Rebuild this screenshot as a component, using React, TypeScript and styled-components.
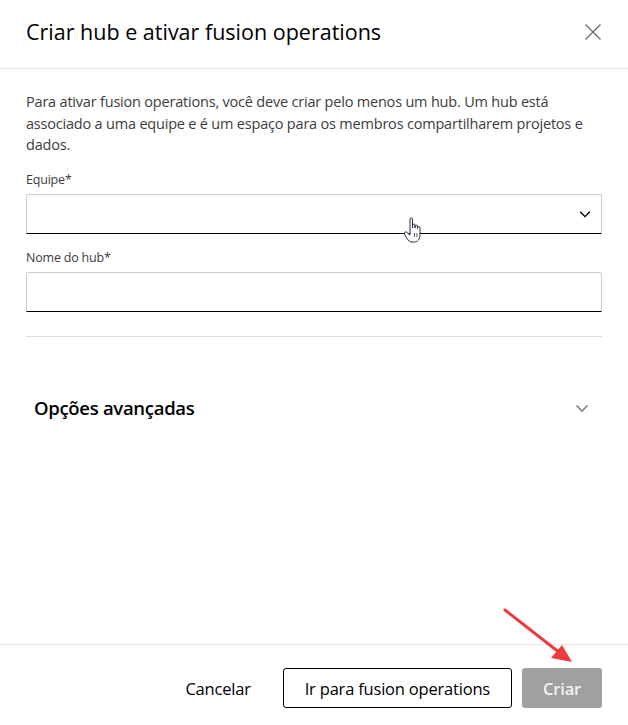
import React from 'react';
import styled, { createGlobalStyle } from 'styled-components';

const GlobalStyle = createGlobalStyle`
  html, body {
    margin: 0;
    padding: 0;
    background: #ffffff;
  }
  body {
    font-family: "Open Sans", "Liberation Sans", Arial, sans-serif;
    color: #3c3c3c;
  }
  * {
    box-sizing: border-box;
  }
`;

const Dialog = styled.div`
  position: relative;
  width: 628px;
  height: 725px;
  display: flex;
  flex-direction: column;
  background: #ffffff;
  overflow: hidden;
`;

const Header = styled.div`
  height: 69px;
  flex: none;
  display: flex;
  align-items: center;
  justify-content: space-between;
  padding: 0 26px 5px 26px;
  border-bottom: 1px solid #e4e4e4;
`;

const Title = styled.h1`
  margin: 0;
  font-size: 21.5px;
  font-weight: 400;
  color: #000000;
  letter-spacing: 0;
`;

const CloseButton = styled.button`
  border: none;
  background: none;
  padding: 0;
  width: 18px;
  height: 18px;
  display: flex;
  align-items: center;
  justify-content: center;
  cursor: pointer;
`;

const Body = styled.div`
  flex: 1;
  padding: 22px 26px 0 26px;
  display: flex;
  flex-direction: column;
`;

const Intro = styled.p`
  margin: 0 0 16px 0;
  font-size: 14.5px;
  line-height: 21.5px;
  color: #3c3c3c;
  letter-spacing: -0.2px;
`;

const Field = styled.div`
  display: flex;
  flex-direction: column;
  margin-bottom: 16px;
`;

const Label = styled.label`
  font-size: 12.5px;
  line-height: 16px;
  color: #3c3c3c;
  margin-bottom: 6px;
  letter-spacing: -0.2px;
`;

const InputBox = styled.div<{ $select?: boolean }>`
  height: 40px;
  border: 1px solid #cccccc;
  border-bottom: 1px solid #000000;
  border-radius: 2px 2px 0 0;
  display: flex;
  align-items: center;
  justify-content: flex-end;
  padding-right: ${(p) => (p.$select ? '9px' : '0')};
`;

const Divider = styled.div`
  height: 1px;
  background: #dedede;
  margin-top: 8px;
`;

const Accordion = styled.div`
  margin-top: 59px;
  padding: 0 12px 0 8px;
  height: 24px;
  display: flex;
  align-items: center;
  justify-content: space-between;
`;

const AccordionTitle = styled.span`
  font-size: 18.5px;
  font-weight: 600;
  color: #000000;
  letter-spacing: -0.3px;
`;

const Footer = styled.div`
  height: 81px;
  flex: none;
  border-top: 1px solid #e4e4e4;
  display: flex;
  align-items: flex-start;
  justify-content: flex-end;
  gap: 10px;
  padding: 23px 26px 0 0;
`;

const Button = styled.button<{ $variant: 'ghost' | 'outline' | 'primary' }>`
  height: 40px;
  font-family: "Open Sans", "Liberation Sans", Arial, sans-serif;
  font-size: 16.5px;
  letter-spacing: -0.2px;
  border-radius: 3px;
  padding: 0 ${(p) => (p.$variant === 'outline' ? '21px' : '16px')};
  cursor: pointer;
  color: ${(p) => (p.$variant === 'primary' ? '#f2f2f2' : '#000000')};
  font-weight: ${(p) => (p.$variant === 'primary' ? 600 : 400)};
  border: ${(p) => (p.$variant === 'outline' ? '1px solid #000000' : 'none')};
  background: ${(p) => (p.$variant === 'primary' ? '#a0a0a0' : '#ffffff')};
  width: ${(p) => (p.$variant === 'primary' ? '80px' : 'auto')};
  margin-right: ${(p) => (p.$variant === 'ghost' ? '6px' : '0')};
`;

const Overlay = styled.svg`
  position: absolute;
  left: 0;
  top: 0;
  pointer-events: none;
`;

const Chevron = ({ color, size }: { color: string; size: number }) => (
  <svg width={size} height={size} viewBox="0 0 16 16" fill="none">
    <path d="M2.5 5.5 L8 11 L13.5 5.5" stroke={color} strokeWidth="1.6" />
  </svg>
);

export default function App() {
  return (
    <>
      <GlobalStyle />
      <Dialog>
        <Header>
          <Title>Criar hub e ativar fusion operations</Title>
          <CloseButton aria-label="Fechar">
            <svg width="18" height="18" viewBox="0 0 18 18" fill="none">
              <path d="M1.5 1.5 L16.5 16.5 M16.5 1.5 L1.5 16.5" stroke="#6e6e6e" strokeWidth="1.4" />
            </svg>
          </CloseButton>
        </Header>
        <Body>
          <Intro>
            Para ativar fusion operations, você deve criar pelo menos um hub. Um hub está associado a uma
            equipe e é um espaço para os membros compartilharem projetos e dados.
          </Intro>
          <Field>
            <Label>Equipe*</Label>
            <InputBox $select>
              <Chevron color="#000000" size={14} />
            </InputBox>
          </Field>
          <Field>
            <Label>Nome do hub*</Label>
            <InputBox />
          </Field>
          <Divider />
          <Accordion>
            <AccordionTitle>Opções avançadas</AccordionTitle>
            <Chevron color="#808080" size={16} />
          </Accordion>
        </Body>
        <Footer>
          <Button $variant="ghost">Cancelar</Button>
          <Button $variant="outline">Ir para fusion operations</Button>
          <Button $variant="primary">Criar</Button>
        </Footer>

        <Overlay width="628" height="725" viewBox="0 0 628 725">
          <line x1="505" y1="610" x2="560" y2="653" stroke="#f0393b" strokeWidth="3" strokeLinecap="round" />
          <polygon points="572,662 551,658 562,645" fill="#f0393b" />
          <g transform="translate(404 217)">
            <path
              d="M6 2 C6 0.6 8.5 0.6 8.5 2 L8.5 11 L8.5 8 C8.5 6.8 11 6.8 11 8 L11 11 L11 9 C11 7.8 13.5 7.8 13.5 9 L13.5 11.5 L13.5 10.5 C13.5 9.4 16 9.4 16 10.5 L16 18 C16 22 14 25 10 25 L8 25 C5.5 25 4.5 23.5 3 21.5 L0.5 17 C-0.3 15.6 1.5 14.2 2.8 15.3 L6 18 Z"
              fill="#ffffff"
              stroke="#2a2a40"
              strokeWidth="1"
              strokeLinejoin="round"
            />
            <path d="M10.5 16 V20 M13 16 V20" stroke="#2a2a40" strokeWidth="0.8" />
          </g>
        </Overlay>
      </Dialog>
    </>
  );
}
